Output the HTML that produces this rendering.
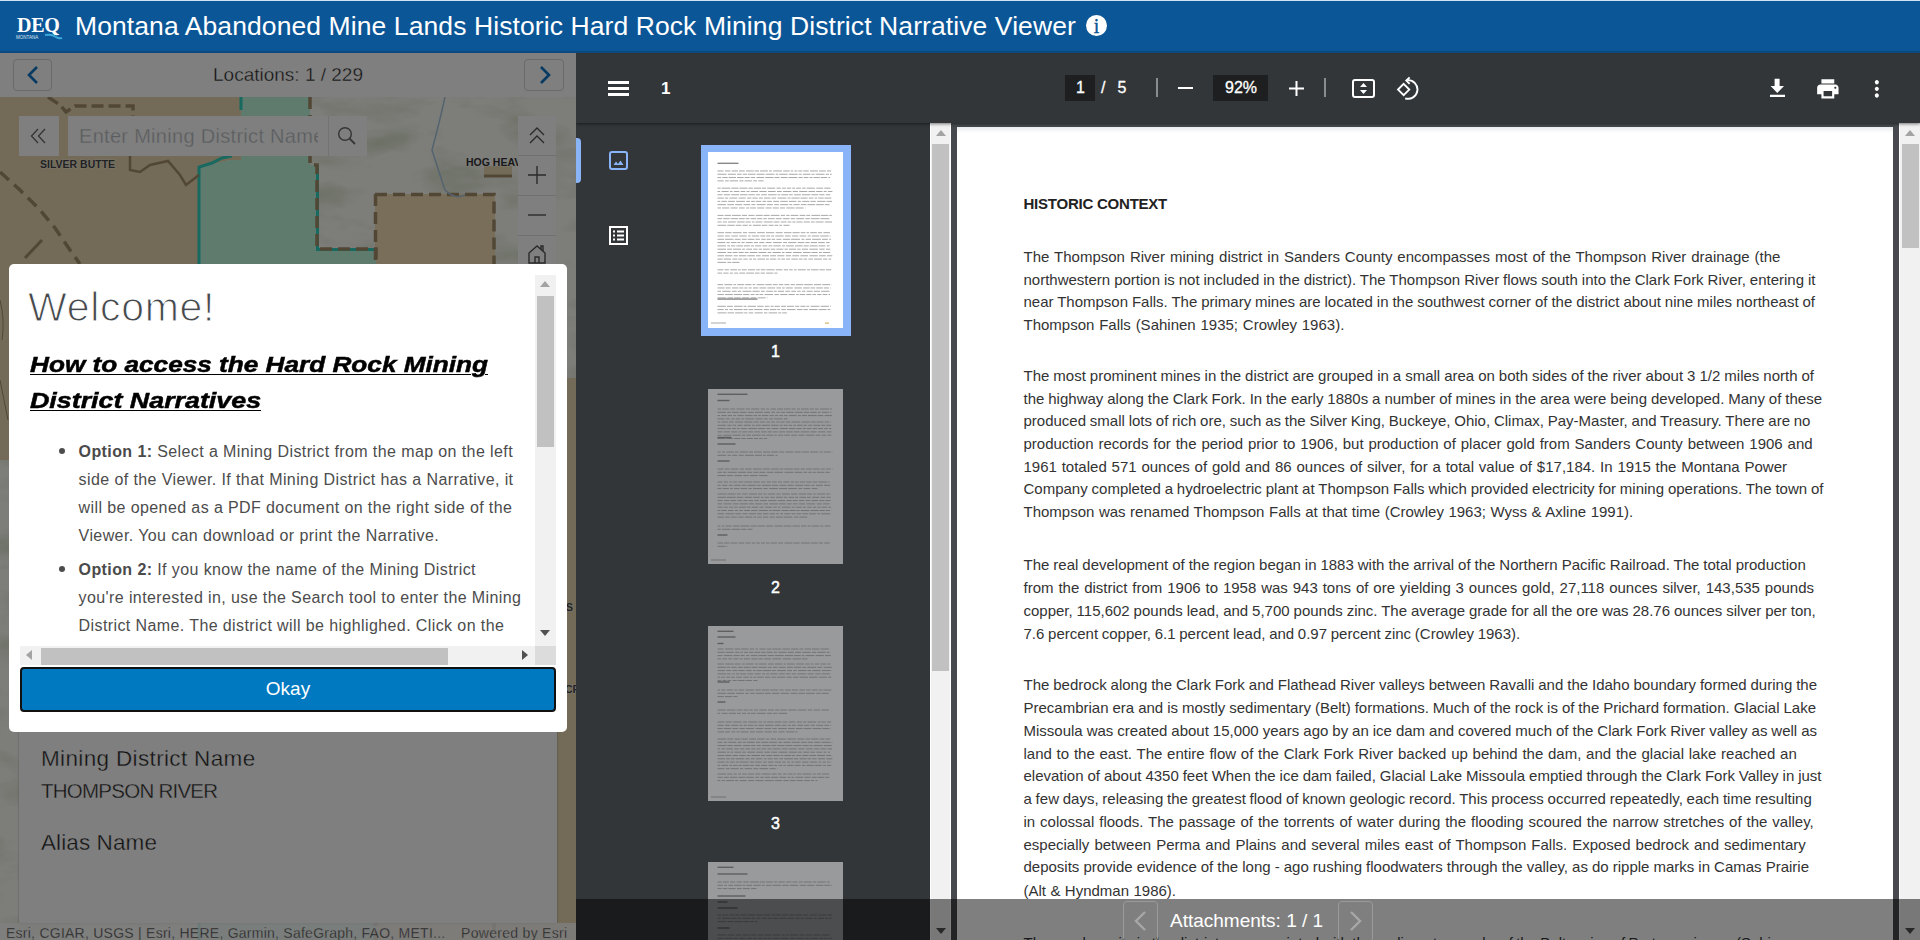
<!DOCTYPE html>
<html><head><meta charset="utf-8">
<style>
*{box-sizing:border-box}
html,body{margin:0;padding:0}
body{width:1920px;height:940px;overflow:hidden;position:relative;font-family:"Liberation Sans",sans-serif;background:#323639}
.abs{position:absolute}
#hdr{left:0;top:0;width:1920px;height:53px;background:#0b5697;border-top:1px solid #cfe3f3;border-bottom:2px solid #0a4a80}
#hdr .title{left:75px;top:9px;color:#fff;font-size:26.5px;white-space:nowrap;line-height:32px;letter-spacing:0.09px}
#left{left:0;top:53px;width:576px;height:887px;overflow:hidden;background:#e8e4d8}
#pdf{left:576px;top:53px;width:1344px;height:887px;overflow:hidden;background:#323639}
.nw{white-space:nowrap}
.hd{font-size:22.5px;line-height:35px;font-weight:bold;font-style:italic;color:#000;-webkit-text-stroke:0.5px #000;text-decoration:underline;text-decoration-thickness:1px;text-underline-offset:2px;transform-origin:0 0}
.bl{left:69.6px;font-size:16px;line-height:20px;color:#4c4c4c;letter-spacing:0.4px}
.bl b{color:#4a4a4a}
.pl{position:absolute;left:66.5px;font-size:15px;line-height:17px;white-space:nowrap;color:#333}
</style></head>
<body>
<!-- HEADER -->
<div id="hdr" class="abs">
  <div class="abs" style="left:17px;top:14px;color:#fff;font-family:'Liberation Serif',serif;font-weight:bold;font-size:20px;line-height:20px;letter-spacing:-0.3px">DEQ</div>
  <div class="abs" style="left:16px;top:34px;color:#dfe8f0;font-size:4.5px;line-height:5px;letter-spacing:0px">MONTANA</div>
  <svg class="abs" style="left:44px;top:32px" width="20" height="8"><path d="M1 2 Q8 1 12 4 Q15 6 18 5" stroke="#3aa8d8" stroke-width="2" fill="none"/></svg>
  <div class="abs title">Montana Abandoned Mine Lands Historic Hard Rock Mining District Narrative Viewer</div>
  <div class="abs" style="left:1086px;top:14px;width:21px;height:21px;border-radius:50%;background:#fff;color:#0b5697;font-family:'Liberation Serif',serif;font-size:20px;line-height:22px;text-align:center;-webkit-text-stroke:0.3px #0b4f8a">i</div>
</div>

<!-- LEFT PANEL -->
<div id="left" class="abs">
  <!-- MAP -->
  <svg class="abs" style="left:0;top:44px" width="576" height="843" viewBox="0 97 576 843">
    <defs>
      <filter id="topo" x="0" y="0" width="100%" height="100%">
        <feTurbulence type="fractalNoise" baseFrequency="0.014 0.03" numOctaves="4" seed="5" result="n"/>
        <feColorMatrix in="n" type="matrix" values="0 0 0 0 0.60  0 0 0 0 0.68  0 0 0 0 0.48  1.7 0 0 0 -0.80"/>
      </filter>
    </defs>
    <rect x="0" y="97" width="576" height="843" fill="#fbfbf5"/>
    <rect x="0" y="97" width="576" height="843" filter="url(#topo)"/>
    <!-- tan districts -->
    <path d="M0 97 H241 V160 L230 160 L199 167 V460 H0 Z" fill="#e6d6ae"/>
    <rect x="375" y="194" width="120" height="746" fill="#f0dcb4"/>
    <rect x="495" y="378" width="81" height="562" fill="#e6d6ae"/>
    <rect x="484" y="166" width="28" height="10" fill="#e6d6ae"/>
    <!-- teal district -->
    <path d="M241 97 H310 V165 H317 V249 H376 V940 H199 V167 L230 160 L241 160 Z" fill="#bcf6dc"/>
    <path d="M241 97 V110 M199 940 V167 L212 163 L222 158 L232 156" stroke="#30d2bf" stroke-width="3" fill="none"/>
    <path d="M317.5 165 V249.5 H376" stroke="#30d2bf" stroke-width="3" fill="none"/>
    <path d="M310 97 V165 H317 V249 H376 V940" stroke="#a48e6a" stroke-width="3.5" stroke-dasharray="12 6" fill="none"/>
    <path d="M375 194.5 H494 V940" stroke="#a48e6a" stroke-width="3.5" stroke-dasharray="12 6" fill="none"/>
    <path d="M375.5 194 V940" stroke="#a48e6a" stroke-width="3.5" stroke-dasharray="12 6" fill="none"/>
    <path d="M484 176 H512" stroke="#a48e6a" stroke-width="3" fill="none"/>
    <!-- other boundaries -->
    <path d="M48 97 L60 105 L66 112 L75 106 H133 V125" stroke="#a48e6a" stroke-width="3.5" stroke-dasharray="12 5" fill="none"/>
    <path d="M130 156 V170 L140 172 L150 165 L168 161 L180 175 L186 185 L199 175" stroke="#a48e6a" stroke-width="2.5" fill="none"/>
    <path d="M0 172 L20 190 L40 210 L55 228 L70 250 L80 264" stroke="#a48e6a" stroke-width="3.5" stroke-dasharray="12 7" fill="none"/>
    <path d="M25 258 L42 240" stroke="#a48e6a" stroke-width="3" fill="none"/>
    <path d="M0 300 Q5 320 2 340 M0 380 L8 420" stroke="#a48e6a" stroke-width="1" fill="none"/>
    <path d="M445 97 Q440 120 432 150 Q440 175 445 190 Q455 200 465 195" stroke="#a8c6dc" stroke-width="1.5" fill="none"/>
    <text x="40" y="167.5" font-family="Liberation Sans" font-weight="bold" font-size="10.5" fill="#444" stroke="#fff" stroke-width="0.6" paint-order="stroke">SILVER BUTTE</text>
    <text x="566" y="611" font-family="Liberation Sans" font-weight="bold" font-size="10.5" fill="#444" stroke="#fff" stroke-width="0.6" paint-order="stroke">S</text>
    <text x="565" y="693" font-family="Liberation Sans" font-weight="bold" font-size="10.5" fill="#444" stroke="#fff" stroke-width="0.6" paint-order="stroke">CR</text>
    <text x="466" y="165.5" font-family="Liberation Sans" font-weight="bold" font-size="10.5" fill="#333" stroke="#fff" stroke-width="0.6" paint-order="stroke">HOG HEAV</text>
  </svg>
  <!-- locations bar -->
  <div class="abs" style="left:0;top:0;width:576px;height:44px;background:#fff"></div>
  <div class="abs" style="left:13px;top:6px;width:39px;height:32px;border:1px solid #d4d4d4;border-radius:4px;background:#fff">
    <svg class="abs" style="left:12px;top:5px" width="14" height="20"><path d="M11 2 L3 10 L11 18" stroke="#0a74c4" stroke-width="2.6" fill="none"/></svg>
  </div>
  <div class="abs" style="left:524px;top:6px;width:40px;height:32px;border:1px solid #d4d4d4;border-radius:4px;background:#fff">
    <svg class="abs" style="left:13px;top:5px" width="14" height="20"><path d="M3 2 L11 10 L3 18" stroke="#0a74c4" stroke-width="2.6" fill="none"/></svg>
  </div>
  <div class="abs nw" style="left:213px;top:11px;font-size:19px;line-height:22px;color:#222;-webkit-text-stroke:0.35px #fff">Locations: 1 / 229</div>
  <!-- search widget -->
  <div class="abs" style="left:19px;top:63px;width:40px;height:40px;background:#fff">
    <svg class="abs" style="left:11px;top:12px" width="18" height="16"><path d="M8 1 L1.5 8 L8 15 M15 1 L8.5 8 L15 15" stroke="#6e6e6e" stroke-width="1.4" fill="none"/></svg>
  </div>
  <div class="abs" style="left:68px;top:63px;width:299px;height:40px;background:#fff;overflow:hidden">
    <div class="abs nw" style="left:11px;top:9px;width:239px;overflow:hidden;font-size:20px;line-height:22px;color:#b4b8bc;letter-spacing:0.3px;-webkit-text-stroke:0.3px #fff">Enter Mining District Name</div>
    <div class="abs" style="left:260px;top:0;width:1px;height:40px;background:#e6e6e6"></div>
    <svg class="abs" style="left:269px;top:10px" width="20" height="20"><circle cx="8" cy="8" r="6.3" stroke="#6e6e6e" stroke-width="1.5" fill="none"/><path d="M12.5 12.5 L18 18" stroke="#6e6e6e" stroke-width="1.8"/></svg>
  </div>
  <!-- zoom controls -->
  <div class="abs" style="left:518px;top:63px;width:38px;height:160px;background:#fff">
    <div class="abs" style="left:0;top:39px;width:38px;height:1px;background:#e0e0e0"></div>
    <div class="abs" style="left:0;top:79px;width:38px;height:1px;background:#e0e0e0"></div>
    <div class="abs" style="left:0;top:119px;width:38px;height:1px;background:#e0e0e0"></div>
    <svg class="abs" style="left:10px;top:10px" width="18" height="20"><path d="M2 9 L9 2 L16 9 M2 17 L9 10 L16 17" stroke="#555" stroke-width="1.4" fill="none"/></svg>
    <svg class="abs" style="left:10px;top:50px" width="18" height="18"><path d="M9 0 V18 M0 9 H18" stroke="#555" stroke-width="1.4"/></svg>
    <svg class="abs" style="left:10px;top:90px" width="18" height="18"><path d="M0 9 H18" stroke="#555" stroke-width="1.4"/></svg>
    <svg class="abs" style="left:9px;top:128px" width="20" height="20"><path d="M2 19 V9 L10 2 L18 9 V19 Z M8 19 V13 H12 V19 M14 5 V2 H16 V7" stroke="#555" stroke-width="1.4" fill="none"/></svg>
  </div>
  <!-- popup panel -->
  <div class="abs" style="left:19px;top:560px;width:538px;height:310px;background:#fff;box-shadow:0 1px 2px rgba(0,0,0,.3)">
    <div class="abs nw" style="left:22px;top:133px;font-size:22.5px;line-height:26px;color:#222;letter-spacing:0.35px;-webkit-text-stroke:0.35px #fff">Mining District Name</div>
    <div class="abs nw" style="left:22px;top:166px;font-size:20.5px;line-height:24px;color:#222;letter-spacing:-0.75px;-webkit-text-stroke:0.35px #fff">THOMPSON RIVER</div>
    <div class="abs nw" style="left:22px;top:217px;font-size:22.5px;line-height:26px;color:#222;letter-spacing:0.1px;-webkit-text-stroke:0.35px #fff">Alias Name</div>
  </div>
  <!-- attribution -->
  <div class="abs" style="left:0;top:870px;width:576px;height:17px;background:rgba(255,255,255,.8)">
    <div class="abs nw" style="left:6px;top:1.5px;font-size:14px;line-height:16px;color:#3a3a3a;width:445px;overflow:hidden;letter-spacing:0.25px;-webkit-text-stroke:0.3px #fff">Esri, CGIAR, USGS | Esri, HERE, Garmin, SafeGraph, FAO, METI...</div>
    <div class="abs nw" style="left:461px;top:1.5px;font-size:14px;line-height:16px;color:#3a3a3a;letter-spacing:0.3px;-webkit-text-stroke:0.3px #fff">Powered by Esri</div>
  </div>
  <!-- overlay -->
  <div class="abs" style="left:0;top:0;width:576px;height:887px;background:rgba(0,0,0,.5)"></div>
  <!-- modal -->
  <div class="abs" style="left:9px;top:211px;width:558px;height:468px;background:#fff;border-radius:5px;overflow:hidden">

    <div class="abs nw" style="left:19px;top:18.6px;font-size:41px;line-height:48px;color:#45484c;letter-spacing:0.7px;-webkit-text-stroke:1.1px #fff">Welcome!</div>
    <div class="abs nw hd" style="left:20.5px;top:83.1px;transform:scaleX(1.163)">How to access the Hard Rock Mining</div>
    <div class="abs nw hd" style="left:20.5px;top:118.5px;transform:scaleX(1.192)">District Narratives</div>
    <div class="abs" style="left:50px;top:184px;width:6px;height:6px;border-radius:50%;background:#4c4c4c"></div>
    <div class="abs" style="left:50px;top:302px;width:6px;height:6px;border-radius:50%;background:#4c4c4c"></div>
    <div class="abs nw bl" style="top:177.5px"><b>Option 1:</b> Select a Mining District from the map on the left</div>
    <div class="abs nw bl" style="top:205.5px">side of the Viewer. If that Mining District has a Narrative, it</div>
    <div class="abs nw bl" style="top:234.1px">will be opened as a PDF document on the right side of the</div>
    <div class="abs nw bl" style="top:262.1px">Viewer. You can download or print the Narrative.</div>
    <div class="abs nw bl" style="top:295.5px"><b>Option 2:</b> If you know the name of the Mining District</div>
    <div class="abs nw bl" style="top:324.1px">you're interested in, use the Search tool to enter the Mining</div>
    <div class="abs nw bl" style="top:352.2px">District Name. The district will be highlighed. Click on the</div>
    <div class="abs nw bl" style="top:380.2px">district, and the Narrative will be opened on the right side</div>
    <!-- v scrollbar -->
    <div class="abs" style="left:526px;top:11px;width:21px;height:371px;background:#f1f1f1">
      <svg class="abs" style="left:5px;top:6px" width="10" height="6"><path d="M0 6 L5 0 L10 6Z" fill="#a3a3a3"/></svg>
      <div class="abs" style="left:2px;top:21px;width:17px;height:151px;background:#c1c1c1"></div>
      <svg class="abs" style="left:5px;top:355px" width="10" height="6"><path d="M0 0 L5 6 L10 0Z" fill="#505050"/></svg>
    </div>
    <!-- h scrollbar -->
    <div class="abs" style="left:11px;top:382px;width:515px;height:19px;background:#f1f1f1">
      <svg class="abs" style="left:6px;top:4px" width="6" height="10"><path d="M6 0 L0 5 L6 10Z" fill="#a3a3a3"/></svg>
      <div class="abs" style="left:21px;top:2px;width:407px;height:17px;background:#c1c1c1"></div>
      <svg class="abs" style="left:502px;top:4px" width="6" height="10"><path d="M0 0 L6 5 L0 10Z" fill="#505050"/></svg>
    </div>
    <div class="abs" style="left:526px;top:382px;width:21px;height:19px;background:#dcdcdc"></div>
    <!-- okay -->
    <div class="abs" style="left:11px;top:403px;width:536px;height:45px;background:#0079c1;border:2px solid #111;border-radius:4px"></div>
    <div class="abs nw" style="left:11px;top:414px;width:536px;text-align:center;font-size:19px;line-height:22px;color:#fff">Okay</div>
  </div>
</div>

<!-- PDF VIEWER -->
<div id="pdf" class="abs">
  <!-- toolbar -->
  <div class="abs" style="left:0;top:0;width:1344px;height:70px;background:#323639;box-shadow:0 1px 3px rgba(0,0,0,.5);z-index:3">
    <svg class="abs" style="left:32px;top:28px" width="21" height="15"><rect x="0" y="0" width="21" height="3" fill="#fff"/><rect x="0" y="6" width="21" height="3" fill="#fff"/><rect x="0" y="12" width="21" height="3" fill="#fff"/></svg>
    <div class="abs" style="left:85px;top:25px;color:#fff;font-size:17px;font-weight:bold;line-height:22px">1</div>
    <div class="abs" style="left:489px;top:22px;width:30px;height:26px;background:#1d1f21"></div>
    <div class="abs" style="left:500px;top:25px;color:#fff;font-size:16px;line-height:20px;-webkit-text-stroke:0.3px #fff">1</div>
    <div class="abs" style="left:525px;top:25px;color:#fff;font-size:16px;line-height:20px;-webkit-text-stroke:0.3px #fff">/</div>
    <div class="abs" style="left:541.5px;top:25px;color:#fff;font-size:16px;line-height:20px;-webkit-text-stroke:0.3px #fff">5</div>
    <div class="abs" style="left:580px;top:25px;width:2px;height:19px;background:#8a8d90"></div>
    <div class="abs" style="left:602px;top:34px;width:15px;height:2px;background:#fff"></div>
    <div class="abs" style="left:637px;top:22px;width:55px;height:26px;background:#1d1f21"></div>
    <div class="abs" style="left:649px;top:25px;color:#fff;font-size:16px;line-height:20px;-webkit-text-stroke:0.3px #fff">92%</div>
    <svg class="abs" style="left:713px;top:28px" width="15" height="15"><rect x="6.5" y="0" width="2" height="15" fill="#fff"/><rect x="0" y="6.5" width="15" height="2" fill="#fff"/></svg>
    <div class="abs" style="left:748px;top:25px;width:2px;height:19px;background:#8a8d90"></div>
    <svg class="abs" style="left:776px;top:26px" width="23" height="19"><rect x="1" y="1" width="21" height="17" rx="2" fill="none" stroke="#fff" stroke-width="2"/><path d="M11.5 4 L15 8 H8 Z M11.5 15 L15 11 H8 Z" fill="#fff"/></svg>
    <svg class="abs" style="left:820px;top:23px" width="24" height="24" viewBox="0 0 24 24"><path d="M7.65 7.95 L13.25 13.55 L7.65 19.15 L2.05 13.55 Z" fill="none" stroke="#fff" stroke-width="1.9"/><path d="M11.5 4.2 A9.3 9.3 0 1 1 9.2 22.3" fill="none" stroke="#fff" stroke-width="1.9"/><path d="M13.6 1.3 L10.3 4.6 L13.6 7.9" fill="none" stroke="#fff" stroke-width="1.9"/></svg>
    <svg class="abs" style="left:1188px;top:22px" width="26" height="26" viewBox="0 0 26 26"><path d="M10.6 3.75 H15.6 V11 H20 L13.3 17.9 L6.6 11 H10.6 Z M6 19.8 H21 V22 H6 Z" fill="#fff"/></svg>
    <svg class="abs" style="left:1238.6px;top:22.5px" width="25.7" height="25.7" viewBox="0 0 24 24"><g><path d="M19 8H5c-1.66 0-3 1.34-3 3v6h4v4h12v-4h4v-6c0-1.66-1.34-3-3-3zm-3 11H8v-5h8v5zm3-7c-.55 0-1-.45-1-1s.45-1 1-1 1 .45 1 1-.45 1-1 1zm-1-9H6v4h12V3z" fill="#fff"/></g></svg>
    <svg class="abs" style="left:1288px;top:22.5px" width="25.7" height="25.7" viewBox="0 0 24 24"><g transform="translate(12 12) scale(0.95 1.03) translate(-12 -12)"><path d="M12 8c1.1 0 2-.9 2-2s-.9-2-2-2-2 .9-2 2 .9 2 2 2zm0 2c-1.1 0-2 .9-2 2s.9 2 2 2 2-.9 2-2-.9-2-2-2zm0 6c-1.1 0-2 .9-2 2s.9 2 2 2 2-.9 2-2-.9-2-2-2z" fill="#fff"/></g></svg>
  </div>
  <!-- sidebar -->
  <div class="abs" style="left:0;top:70px;width:354px;height:817px;background:#323639;overflow:hidden">
    <div class="abs" style="left:0;top:15px;width:5px;height:45px;background:#8ab4f8;border-radius:0 4px 4px 0"></div>
    <svg class="abs" style="left:33px;top:28px" width="19" height="19"><rect x="1" y="1" width="17" height="17" rx="2" fill="none" stroke="#8ab4f8" stroke-width="2"/><path d="M4.5 14 L7 10.5 L9 13 L11.5 9.5 L14.5 14 Z" fill="#8ab4f8"/></svg>
    <svg class="abs" style="left:33px;top:103px" width="19" height="19"><rect x="1" y="1" width="17" height="17" fill="none" stroke="#fff" stroke-width="2"/><rect x="4" y="4.5" width="2" height="2" fill="#fff"/><rect x="4" y="8.5" width="2" height="2" fill="#fff"/><rect x="4" y="12.5" width="2" height="2" fill="#fff"/><rect x="8" y="4.5" width="7" height="2" fill="#fff"/><rect x="8" y="8.5" width="7" height="2" fill="#fff"/><rect x="8" y="12.5" width="7" height="2" fill="#fff"/></svg>

    <div class="abs" style="left:124.5px;top:21.7px;width:150.2px;height:191px;background:#8ab4f8"></div>
    <svg class="abs" style="left:132px;top:29.4px" width="135" height="176"><rect width="135" height="176" fill="#fff"/><rect x="9.5" y="10.62" width="21" height="1.4" fill="#888"/><path d="M9.5 18.96h6.1M17.0 18.96h5.5M23.7 18.96h6.3M31.0 18.96h5.8M38.0 18.96h7.7M46.6 18.96h4.5M52.1 18.96h7.8M61.1 18.96h2.8M65.2 18.96h8.8M75.2 18.96h6.5M82.7 18.96h2.6M86.5 18.96h2.9M90.3 18.96h4.1M95.3 18.96h5.5M102.0 18.96h8.0M111.1 18.96h6.7M118.9 18.96h4.2" stroke="#a8a8a8" stroke-width="1.0"/><path d="M9.5 22.26h9.0M19.9 22.26h8.0M29.1 22.26h4.5M34.7 22.26h4.4M40.0 22.26h7.5M48.6 22.26h8.0M57.7 22.26h8.7M67.7 22.26h2.5M71.2 22.26h8.4M80.8 22.26h8.9M90.7 22.26h3.0M94.9 22.26h7.6M103.5 22.26h3.1M107.7 22.26h8.8M117.7 22.26h3.3M122.0 22.26h1.7" stroke="#a8a8a8" stroke-width="1.0"/><path d="M9.5 25.56h3.7M14.3 25.56h5.4M20.7 25.56h7.3M29.0 25.56h6.7M36.6 25.56h5.2M42.8 25.56h4.3M48.5 25.56h7.7M57.3 25.56h8.3M66.5 25.56h5.1M72.9 25.56h6.7M80.5 25.56h8.9M90.5 25.56h4.2M95.9 25.56h4.6M101.6 25.56h3.0M105.5 25.56h6.3M112.8 25.56h6.4M120.3 25.56h1.8" stroke="#a8a8a8" stroke-width="1.0"/><path d="M9.5 28.86h6.2M17.1 28.86h3.7M21.7 28.86h8.4M31.4 28.86h4.1M36.6 28.86h7.3M45.2 28.86h3.8M50.4 28.86h5.1" stroke="#a8a8a8" stroke-width="1.0"/><path d="M9.5 36.17h3.2M13.6 36.17h8.8M23.4 36.17h7.1M31.5 36.17h7.9M40.5 36.17h4.4M45.9 36.17h7.2M54.0 36.17h4.0M59.2 36.17h8.0M68.5 36.17h4.3M74.1 36.17h3.8M78.9 36.17h4.2M84.2 36.17h2.9M88.1 36.17h4.9M94.2 36.17h3.4M98.6 36.17h8.3M108.3 36.17h6.8M116.3 36.17h6.3" stroke="#a8a8a8" stroke-width="1.0"/><path d="M9.5 39.47h2.6M13.5 39.47h7.1M21.9 39.47h2.6M25.8 39.47h5.6M32.7 39.47h4.6M38.6 39.47h3.0M42.8 39.47h7.3M51.4 39.47h7.3M60.0 39.47h7.7M69.0 39.47h4.8M75.0 39.47h8.4M84.7 39.47h5.2M91.2 39.47h8.1M100.5 39.47h6.6M108.2 39.47h6.3M115.7 39.47h3.0M119.9 39.47h4.5" stroke="#a8a8a8" stroke-width="1.0"/><path d="M9.5 42.77h5.0M15.8 42.77h6.3M23.2 42.77h7.9M32.1 42.77h7.4M40.4 42.77h6.4M47.9 42.77h4.0M53.2 42.77h5.7M60.1 42.77h8.5M69.6 42.77h2.6M73.2 42.77h6.9M81.1 42.77h3.6M86.1 42.77h6.8M94.0 42.77h8.3M103.4 42.77h6.8M111.2 42.77h5.3M117.8 42.77h4.5" stroke="#a8a8a8" stroke-width="1.0"/><path d="M9.5 46.07h6.3M16.8 46.07h3.4M21.4 46.07h7.9M30.6 46.07h7.1M39.1 46.07h4.3M44.4 46.07h5.4M50.9 46.07h3.9M55.9 46.07h6.6M63.6 46.07h4.5M69.5 46.07h8.9M79.5 46.07h3.0M83.4 46.07h8.2M92.5 46.07h7.1M100.8 46.07h4.5M106.6 46.07h2.6M110.2 46.07h5.5M116.5 46.07h6.8" stroke="#a8a8a8" stroke-width="1.0"/><path d="M9.5 49.37h2.8M13.5 49.37h5.4M20.1 49.37h6.8M28.2 49.37h8.7M38.2 49.37h3.8M43.1 49.37h3.7M47.7 49.37h5.6M54.5 49.37h3.7M59.2 49.37h4.7M65.2 49.37h5.9M72.3 49.37h7.4M80.8 49.37h7.6M89.8 49.37h3.1M94.2 49.37h7.2M102.4 49.37h5.4M109.1 49.37h8.4M118.6 49.37h5.5" stroke="#a8a8a8" stroke-width="1.0"/><path d="M9.5 52.67h8.6M19.3 52.67h6.7M27.0 52.67h7.2M35.5 52.67h6.7M43.4 52.67h3.9M48.7 52.67h8.9M58.9 52.67h6.0M66.2 52.67h4.6M72.2 52.67h8.1M81.3 52.67h3.0M85.5 52.67h6.1M92.8 52.67h5.7M99.4 52.67h7.8M108.1 52.67h7.7M116.8 52.67h4.7" stroke="#a8a8a8" stroke-width="1.0"/><path d="M9.5 55.97h3.5M14.1 55.97h7.2M22.6 55.97h7.0M31.0 55.97h5.7M38.1 55.97h3.1M42.1 55.97h5.9M49.1 55.97h7.2M57.6 55.97h5.9M64.8 55.97h6.1M72.0 55.97h5.0M78.3 55.97h8.4M87.6 55.97h8.0M97.1 55.97h0.4" stroke="#a8a8a8" stroke-width="1.0"/><path d="M9.5 63.39h6.0M16.6 63.39h6.4M24.0 63.39h8.8M33.9 63.39h5.1M40.3 63.39h6.2M47.7 63.39h7.0M55.6 63.39h6.0M62.7 63.39h8.7M72.8 63.39h4.2M78.2 63.39h3.3M82.6 63.39h7.8M91.7 63.39h5.6M98.4 63.39h3.7M103.4 63.39h8.5M112.8 63.39h7.6M121.3 63.39h2.6" stroke="#a8a8a8" stroke-width="1.0"/><path d="M9.5 66.69h4.6M15.2 66.69h6.5M22.7 66.69h7.3M30.9 66.69h5.8M37.7 66.69h3.8M42.7 66.69h5.3M49.1 66.69h5.2M55.4 66.69h3.5M60.0 66.69h6.6M67.8 66.69h5.9M75.1 66.69h6.5M82.9 66.69h4.0M88.2 66.69h7.8M97.3 66.69h4.6M102.9 66.69h8.5M112.4 66.69h9.0" stroke="#a8a8a8" stroke-width="1.0"/><path d="M9.5 69.99h4.1M14.8 69.99h4.2M20.0 69.99h7.9M29.0 69.99h7.6M37.6 69.99h5.1M43.9 69.99h2.6M47.5 69.99h6.9M55.8 69.99h8.8M65.6 69.99h5.8M72.7 69.99h5.8M79.7 69.99h3.7M84.3 69.99h3.2M88.4 69.99h6.1M95.7 69.99h6.2M102.9 69.99h3.7M107.6 69.99h8.0M116.9 69.99h7.2" stroke="#a8a8a8" stroke-width="1.0"/><path d="M9.5 73.29h8.7M19.3 73.29h7.5M27.8 73.29h5.5M34.5 73.29h5.3M41.0 73.29h2.6M44.9 73.29h8.0M53.9 73.29h5.5M60.6 73.29h5.1M66.7 73.29h3.6M71.4 73.29h2.6M75.4 73.29h6.1" stroke="#a8a8a8" stroke-width="1.0"/><path d="M9.5 80.69h6.6M17.2 80.69h6.4M24.7 80.69h8.9M34.9 80.69h4.2M40.5 80.69h7.3M49.1 80.69h7.8M58.0 80.69h8.3M67.7 80.69h7.0M76.0 80.69h7.5M84.5 80.69h7.2M92.7 80.69h4.7M98.5 80.69h2.6M102.2 80.69h6.7M110.0 80.69h4.0M115.4 80.69h6.5" stroke="#a8a8a8" stroke-width="1.0"/><path d="M9.5 83.99h6.2M16.9 83.99h5.0M23.3 83.99h6.7M31.2 83.99h7.5M40.1 83.99h2.6M43.9 83.99h7.3M52.3 83.99h5.1M58.3 83.99h3.8M63.1 83.99h3.1M67.3 83.99h8.4M76.9 83.99h5.8M84.1 83.99h6.2M91.6 83.99h6.6M99.6 83.99h3.0M103.8 83.99h7.4M112.2 83.99h8.5M121.7 83.99h0.8" stroke="#a8a8a8" stroke-width="1.0"/><path d="M9.5 87.29h6.5M16.9 87.29h8.6M26.7 87.29h5.9M33.8 87.29h4.9M39.7 87.29h6.8M47.6 87.29h4.3M53.2 87.29h4.4M58.6 87.29h4.1M63.6 87.29h3.5M68.4 87.29h5.0M74.8 87.29h7.4M83.1 87.29h8.9M93.4 87.29h3.0M97.7 87.29h5.3M104.1 87.29h8.8M114.0 87.29h5.9M121.2 87.29h1.8" stroke="#a8a8a8" stroke-width="1.0"/><path d="M9.5 90.59h7.8M18.5 90.59h3.2M23.0 90.59h5.5M29.4 90.59h2.8M33.4 90.59h3.3M37.9 90.59h6.8M45.8 90.59h4.2M51.2 90.59h5.2M57.7 90.59h5.9M65.1 90.59h8.7M75.1 90.59h4.0M80.1 90.59h8.3M89.7 90.59h6.6M97.3 90.59h4.3M102.8 90.59h6.2M110.2 90.59h6.6M118.1 90.59h3.5" stroke="#a8a8a8" stroke-width="1.0"/><path d="M9.5 93.89h8.5M19.3 93.89h2.8M23.0 93.89h4.3M28.4 93.89h6.6M35.9 93.89h6.0M42.8 93.89h3.1M47.1 93.89h6.1M54.4 93.89h4.9M60.5 93.89h3.9M65.4 93.89h7.3M74.1 93.89h3.0M78.0 93.89h7.8M87.0 93.89h7.5M95.5 93.89h5.3M101.8 93.89h7.8M110.6 93.89h6.7M118.8 93.89h2.8" stroke="#a8a8a8" stroke-width="1.0"/><path d="M9.5 97.19h8.5M19.1 97.19h4.9M24.9 97.19h8.2M34.1 97.19h3.0M38.3 97.19h5.7M45.2 97.19h4.4M50.9 97.19h3.0M54.9 97.19h6.8M62.7 97.19h4.5M68.4 97.19h7.0M76.5 97.19h3.4M81.0 97.19h7.2M89.3 97.19h3.3M93.8 97.19h6.2M101.3 97.19h8.6M111.3 97.19h5.3M118.0 97.19h4.3" stroke="#a8a8a8" stroke-width="1.0"/><path d="M9.5 100.49h8.6M19.4 100.49h4.1M24.6 100.49h4.9M30.6 100.49h5.1M36.7 100.49h3.8M41.7 100.49h7.7M50.5 100.49h7.9M59.7 100.49h3.6M64.6 100.49h8.2M73.9 100.49h2.6M77.7 100.49h6.0M84.9 100.49h8.8M94.9 100.49h7.7M103.5 100.49h6.1M110.9 100.49h3.0M114.9 100.49h7.3" stroke="#a8a8a8" stroke-width="1.0"/><path d="M9.5 103.79h6.6M17.1 103.79h7.3M25.7 103.79h4.1M30.8 103.79h7.5M39.4 103.79h7.5M48.0 103.79h4.7M54.1 103.79h6.9M62.1 103.79h6.0M69.3 103.79h7.1M77.8 103.79h5.2M84.3 103.79h6.8M92.4 103.79h7.7M101.5 103.79h8.3M111.1 103.79h6.7M119.0 103.79h5.3" stroke="#a8a8a8" stroke-width="1.0"/><path d="M9.5 107.09h5.2M15.7 107.09h7.3M24.4 107.09h4.9M30.3 107.09h3.8M35.3 107.09h4.4M41.1 107.09h2.9M45.0 107.09h3.2M49.5 107.09h7.5M58.0 107.09h2.9M62.0 107.09h6.3M69.7 107.09h2.7M73.4 107.09h3.7M78.1 107.09h4.0M83.4 107.09h6.4M90.8 107.09h3.7M95.5 107.09h3.6M100.4 107.09h4.5M106.1 107.09h7.8M115.1 107.09h4.2M120.6 107.09h2.6" stroke="#a8a8a8" stroke-width="1.0"/><path d="M9.5 110.39h8.7M19.4 110.39h3.9M24.2 110.39h7.3" stroke="#a8a8a8" stroke-width="1.0"/><path d="M9.5 117.81h5.9M16.6 117.81h4.3M22.3 117.81h6.8M30.1 117.81h2.6M33.8 117.81h4.9M40.0 117.81h7.1M48.3 117.81h3.5M52.8 117.81h4.6M58.4 117.81h8.2M67.8 117.81h6.6M75.8 117.81h4.2M81.2 117.81h3.5M86.0 117.81h2.5M89.8 117.81h8.0M99.1 117.81h3.0M103.2 117.81h7.2M111.3 117.81h5.6M118.0 117.81h5.3" stroke="#a8a8a8" stroke-width="1.0"/><path d="M9.5 121.11h4.5M15.3 121.11h5.2M21.8 121.11h3.1M26.2 121.11h3.9M31.3 121.11h5.9M38.2 121.11h7.9M47.1 121.11h4.5M52.6 121.11h4.5M58.2 121.11h7.1M66.4 121.11h3.1" stroke="#a8a8a8" stroke-width="1.0"/><path d="M9.5 132.66h5.5M16.4 132.66h7.9M25.5 132.66h2.6M29.2 132.66h7.1M37.3 132.66h6.2M44.6 132.66h2.6M48.6 132.66h7.7M57.3 132.66h6.5M64.8 132.66h4.9M70.9 132.66h4.4M76.4 132.66h5.0M82.7 132.66h4.2M87.9 132.66h7.3M96.2 132.66h8.6M106.0 132.66h7.2M114.3 132.66h7.9M123.1 132.66h0.2" stroke="#a8a8a8" stroke-width="1.0"/><path d="M9.5 135.96h7.1M17.6 135.96h5.1M24.0 135.96h6.4M31.3 135.96h4.0M36.3 135.96h3.3M40.7 135.96h3.0M45.0 135.96h5.3M51.5 135.96h6.7M59.4 135.96h7.8M68.4 135.96h4.7M74.1 135.96h2.6M77.8 135.96h7.0M86.3 135.96h7.6M95.1 135.96h6.5M102.5 135.96h4.7M108.2 135.96h6.7M115.9 135.96h5.0M122.0 135.96h0.5" stroke="#a8a8a8" stroke-width="1.0"/><path d="M9.5 139.26h3.5M14.3 139.26h8.4M23.9 139.26h4.8M29.8 139.26h3.4M34.5 139.26h8.9M44.5 139.26h7.2M53.0 139.26h3.8M58.2 139.26h6.6M65.7 139.26h3.0M69.8 139.26h6.2M77.3 139.26h4.6M83.3 139.26h4.8M89.3 139.26h3.3M94.0 139.26h3.4M98.7 139.26h6.0M105.9 139.26h6.1M113.1 139.26h8.4" stroke="#a8a8a8" stroke-width="1.0"/><path d="M9.5 142.56h6.4M16.9 142.56h7.9M25.8 142.56h8.3M35.1 142.56h6.2M42.7 142.56h3.7M47.6 142.56h3.0M51.5 142.56h3.7M56.5 142.56h8.6M66.4 142.56h4.5M72.1 142.56h7.3M80.5 142.56h6.3M88.1 142.56h2.6M91.7 142.56h5.5M98.3 142.56h5.0M104.4 142.56h3.6M109.2 142.56h4.2M114.6 142.56h4.7M120.5 142.56h1.5" stroke="#a8a8a8" stroke-width="1.0"/><path d="M9.5 145.86h8.7M19.4 145.86h5.6M26.1 145.86h6.6M33.9 145.86h7.4M42.6 145.86h5.7M49.7 145.86h7.9M58.9 145.86h0.6" stroke="#a8a8a8" stroke-width="1.0"/><rect x="9.5" y="146.38" width="40" height="1.4" fill="#888"/><path d="M9.5 154.29h8.4M19.0 154.29h5.9M26.1 154.29h8.4M35.5 154.29h2.9M39.6 154.29h8.4M49.2 154.29h6.4M56.9 154.29h4.5M62.6 154.29h3.0M66.5 154.29h5.4M73.1 154.29h5.1M79.1 154.29h7.0M87.2 154.29h4.1M92.4 154.29h5.1M98.4 154.29h2.9M102.7 154.29h8.8M112.8 154.29h8.1M122.0 154.29h0.8" stroke="#a8a8a8" stroke-width="1.0"/><path d="M9.5 157.59h6.2M17.0 157.59h3.1M21.5 157.59h3.3M25.9 157.59h8.7M35.5 157.59h4.1M40.7 157.59h4.6M46.2 157.59h8.3M55.8 157.59h5.1M62.0 157.59h6.3M69.2 157.59h2.7M73.3 157.59h4.5M78.9 157.59h8.6M88.9 157.59h5.6M95.5 157.59h4.4M101.2 157.59h8.3M110.6 157.59h7.9M119.6 157.59h2.7" stroke="#a8a8a8" stroke-width="1.0"/><path d="M9.5 160.89h9.0M19.5 160.89h6.6M27.1 160.89h8.2M36.2 160.89h3.2M40.7 160.89h4.5M46.6 160.89h8.2M56.0 160.89h3.4M60.6 160.89h8.6M70.3 160.89h3.0M74.3 160.89h4.5" stroke="#a8a8a8" stroke-width="1.0"/><rect x="3" y="170.5" width="15" height="1" fill="#aaa"/><rect x="117" y="170.5" width="4" height="1.2" fill="#d9b36a"/></svg>
    <div class="abs" style="left:132px;top:218.5px;width:135px;text-align:center;color:#fff;font-size:16px;line-height:20px;-webkit-text-stroke:0.45px #fff">1</div>
    <svg class="abs" style="left:132px;top:265.8px" width="135" height="175"><rect width="135" height="175" fill="#fff"/><rect x="9.5" y="4.60" width="30" height="1.4" fill="#888"/><rect x="9.5" y="10.80" width="12" height="1.4" fill="#888"/><path d="M9.5 20.00h3.7M14.2 20.00h6.8M22.3 20.00h4.9M28.5 20.00h8.2M37.9 20.00h4.0M42.9 20.00h8.5M52.7 20.00h4.3M58.2 20.00h3.1M62.7 20.00h5.4M69.2 20.00h6.0M76.1 20.00h6.4M83.5 20.00h4.1M89.0 20.00h3.1M93.1 20.00h7.4M101.5 20.00h4.3M107.0 20.00h3.7M112.1 20.00h8.9M121.9 20.00h2.0" stroke="#b0b0b0" stroke-width="1.0"/><path d="M9.5 23.30h8.5M19.2 23.30h3.7M24.0 23.30h6.7M31.8 23.30h6.8M39.9 23.30h5.9M46.9 23.30h8.0M56.1 23.30h5.9M63.4 23.30h3.6M68.3 23.30h3.6M73.1 23.30h4.0M78.2 23.30h7.5M87.1 23.30h7.6M95.7 23.30h5.7M102.4 23.30h6.3M109.8 23.30h2.7M113.8 23.30h7.1M122.1 23.30h1.3" stroke="#b0b0b0" stroke-width="1.0"/><path d="M9.5 26.60h2.6M13.3 26.60h5.3M19.7 26.60h4.2M25.2 26.60h3.0M29.5 26.60h6.2M36.9 26.60h7.6M45.6 26.60h3.5M50.1 26.60h2.8M53.9 26.60h6.5M61.6 26.60h4.2M67.0 26.60h3.1M71.4 26.60h3.6M76.1 26.60h3.5M80.8 26.60h7.9M90.0 26.60h2.9M94.0 26.60h4.9M99.9 26.60h8.8M109.6 26.60h5.7M116.6 26.60h7.4" stroke="#b0b0b0" stroke-width="1.0"/><path d="M9.5 29.90h7.3M17.8 29.90h4.1M23.2 29.90h3.4M27.7 29.90h4.4M33.2 29.90h3.0M37.2 29.90h9.0M47.4 29.90h7.3M55.7 29.90h4.1M61.0 29.90h4.1M66.2 29.90h8.6M75.9 29.90h3.6" stroke="#b0b0b0" stroke-width="1.0"/><path d="M9.5 33.00h2.8M13.4 33.00h6.7M21.0 33.00h4.7M27.0 33.00h8.1M36.3 33.00h8.3M45.7 33.00h5.1M52.1 33.00h5.0M58.3 33.00h3.9M63.3 33.00h3.7M68.2 33.00h3.6M72.7 33.00h3.9M77.8 33.00h4.5M83.4 33.00h9.0M93.6 33.00h8.1M102.7 33.00h5.0M108.6 33.00h7.0M116.7 33.00h4.3M121.9 33.00h0.8" stroke="#b0b0b0" stroke-width="1.0"/><path d="M9.5 36.30h8.5M19.3 36.30h4.2M24.6 36.30h3.5M29.5 36.30h4.8M35.6 36.30h7.2M44.1 36.30h2.6M47.8 36.30h5.0M53.8 36.30h8.2M63.1 36.30h7.5M71.7 36.30h2.9M75.7 36.30h4.0M80.7 36.30h3.5M85.3 36.30h2.7M89.1 36.30h5.3M95.5 36.30h3.4M100.2 36.30h4.2M105.6 36.30h6.8M113.4 36.30h3.8M118.3 36.30h5.0" stroke="#b0b0b0" stroke-width="1.0"/><path d="M9.5 39.60h8.1M18.6 39.60h4.4M24.1 39.60h3.9M28.9 39.60h2.7M32.8 39.60h6.2M40.3 39.60h8.8M50.2 39.60h6.9M58.4 39.60h3.9M63.6 39.60h6.8M71.8 39.60h8.1M80.9 39.60h6.6M88.5 39.60h5.3M94.9 39.60h2.9M98.8 39.60h4.6M104.6 39.60h4.3M109.9 39.60h5.1M116.2 39.60h3.6M121.0 39.60h2.4" stroke="#b0b0b0" stroke-width="1.0"/><path d="M9.5 42.90h5.2M15.7 42.90h6.3M23.3 42.90h6.1M30.6 42.90h2.6M34.3 42.90h4.9M40.1 42.90h5.1M46.2 42.90h5.7M53.1 42.90h5.5M59.7 42.90h4.1M64.8 42.90h4.8M70.9 42.90h6.2M78.1 42.90h6.8M85.9 42.90h5.6M92.7 42.90h8.7M102.5 42.90h6.2M110.1 42.90h7.5M118.8 42.90h4.7" stroke="#b0b0b0" stroke-width="1.0"/><path d="M9.5 46.20h4.3M15.1 46.20h8.2M24.4 46.20h8.4M33.8 46.20h3.4M38.3 46.20h4.5M43.9 46.20h8.9M53.7 46.20h3.8M58.5 46.20h6.9M66.4 46.20h2.5M70.1 46.20h5.1M76.2 46.20h5.7M83.1 46.20h6.1M90.4 46.20h6.1M97.8 46.20h8.8M107.7 46.20h4.8M113.8 46.20h4.5M119.6 46.20h3.7" stroke="#b0b0b0" stroke-width="1.0"/><path d="M9.5 49.50h7.9M18.3 49.50h6.5M26.0 49.50h6.2M33.3 49.50h4.4M38.9 49.50h6.0M45.9 49.50h4.1M51.1 49.50h3.7M55.9 49.50h3.3" stroke="#b0b0b0" stroke-width="1.0"/><rect x="9.5" y="47.80" width="14" height="1.4" fill="#888"/><rect x="9.5" y="54.30" width="18" height="1.4" fill="#888"/><path d="M9.5 63.00h3.2M13.9 63.00h3.2M18.3 63.00h7.5M26.9 63.00h3.6M31.8 63.00h8.2M40.9 63.00h4.2M46.2 63.00h7.7M55.0 63.00h7.2M63.2 63.00h7.2M71.4 63.00h4.7M77.3 63.00h8.0M86.6 63.00h6.2M93.9 63.00h7.1M102.2 63.00h7.9M111.4 63.00h3.3M115.8 63.00h6.9M123.7 63.00h0.6" stroke="#b0b0b0" stroke-width="1.0"/><path d="M9.5 66.30h8.6M19.5 66.30h3.4M24.1 66.30h5.2M30.6 66.30h5.1M37.0 66.30h8.9M46.9 66.30h7.1M54.9 66.30h2.8M58.8 66.30h7.3M67.4 66.30h2.1" stroke="#b0b0b0" stroke-width="1.0"/><rect x="9.5" y="71.30" width="12" height="1.4" fill="#888"/><path d="M9.5 80.00h6.0M16.7 80.00h4.9M22.7 80.00h7.7M31.7 80.00h4.3M37.1 80.00h6.5M44.9 80.00h8.9M54.9 80.00h7.0M63.1 80.00h7.7M71.7 80.00h3.6M76.3 80.00h8.6M85.9 80.00h5.7M92.6 80.00h4.6M98.1 80.00h6.2M105.2 80.00h6.6M112.8 80.00h4.0M117.9 80.00h4.9M123.9 80.00h0.6" stroke="#b0b0b0" stroke-width="1.0"/><path d="M9.5 83.30h4.5M14.9 83.30h3.7M19.8 83.30h9.0M29.8 83.30h8.1M39.0 83.30h5.2M45.5 83.30h5.1M51.5 83.30h6.1M58.8 83.30h6.5M66.4 83.30h8.6M76.4 83.30h9.0M86.5 83.30h7.9M95.6 83.30h3.6M100.2 83.30h3.6M104.8 83.30h3.0M108.8 83.30h7.4M117.3 83.30h4.6" stroke="#b0b0b0" stroke-width="1.0"/><path d="M9.5 86.60h8.7M19.1 86.60h5.9M26.4 86.60h7.6M35.3 86.60h5.1M41.7 86.60h7.9M50.9 86.60h8.6" stroke="#b0b0b0" stroke-width="1.0"/><path d="M9.5 93.00h5.1M15.9 93.00h4.1M21.4 93.00h2.7M25.2 93.00h4.0M30.3 93.00h4.9M36.4 93.00h7.8M45.2 93.00h6.6M53.0 93.00h4.3M58.6 93.00h4.6M64.2 93.00h4.7M70.1 93.00h3.9M75.3 93.00h6.1M82.6 93.00h3.7M87.2 93.00h3.4M91.7 93.00h5.3M97.9 93.00h5.8M104.7 93.00h4.6M110.5 93.00h8.7M120.2 93.00h1.5" stroke="#b0b0b0" stroke-width="1.0"/><path d="M9.5 96.30h3.2M14.1 96.30h5.3M20.8 96.30h3.9M25.8 96.30h7.1M33.9 96.30h4.3M39.4 96.30h8.7M49.1 96.30h3.7M53.9 96.30h8.9M63.8 96.30h6.6M71.5 96.30h6.7M79.2 96.30h6.5M87.1 96.30h8.1M96.3 96.30h5.8M103.3 96.30h3.2M107.9 96.30h7.0M116.0 96.30h6.3" stroke="#b0b0b0" stroke-width="1.0"/><path d="M9.5 99.60h4.0M14.7 99.60h6.2M22.1 99.60h2.7M26.0 99.60h5.4M32.6 99.60h6.4M40.3 99.60h3.5M45.0 99.60h9.0M55.2 99.60h4.5M61.0 99.60h8.9M71.0 99.60h8.1M80.1 99.60h8.9M90.2 99.60h4.0M95.5 99.60h6.7M103.6 99.60h5.9" stroke="#b0b0b0" stroke-width="1.0"/><path d="M9.5 105.00h9.0M19.4 105.00h8.2M28.8 105.00h4.1M34.2 105.00h5.5M40.9 105.00h8.1M50.0 105.00h4.3M55.5 105.00h3.0M59.7 105.00h7.6M68.4 105.00h4.1M73.8 105.00h8.1M83.2 105.00h6.1M90.6 105.00h7.7M99.2 105.00h4.9M105.1 105.00h2.7M108.9 105.00h8.1M118.3 105.00h3.3M122.6 105.00h0.4" stroke="#b0b0b0" stroke-width="1.0"/><path d="M9.5 108.30h8.4M18.8 108.30h8.9M28.7 108.30h6.6M36.7 108.30h7.2M44.9 108.30h6.8M52.8 108.30h2.6M56.5 108.30h4.5M62.3 108.30h4.3M67.8 108.30h7.0M75.8 108.30h3.3M80.4 108.30h5.5M86.9 108.30h3.3M91.5 108.30h6.5M99.0 108.30h3.8M104.2 108.30h7.0M112.5 108.30h4.8M118.4 108.30h4.3" stroke="#b0b0b0" stroke-width="1.0"/><path d="M9.5 111.60h5.3M16.1 111.60h5.2M22.4 111.60h5.8M29.5 111.60h4.8M35.5 111.60h4.0M40.7 111.60h4.4M46.4 111.60h4.4M52.1 111.60h6.9M60.1 111.60h8.6M69.8 111.60h7.3M78.3 111.60h5.4M84.7 111.60h5.2M91.0 111.60h5.4M97.7 111.60h4.4M103.3 111.60h6.9M111.2 111.60h5.2M117.4 111.60h5.2" stroke="#b0b0b0" stroke-width="1.0"/><path d="M9.5 114.90h4.7M15.5 114.90h8.0M24.8 114.90h6.0M31.8 114.90h8.3M41.0 114.90h4.9M47.0 114.90h7.2M55.4 114.90h4.7M61.5 114.90h8.7M71.1 114.90h6.6M78.8 114.90h4.9M84.8 114.90h4.6M90.6 114.90h6.4M98.4 114.90h8.8M108.7 114.90h5.1M115.0 114.90h6.7M123.0 114.90h0.2" stroke="#b0b0b0" stroke-width="1.0"/><path d="M9.5 118.20h5.1M15.8 118.20h3.9M21.1 118.20h3.9M26.1 118.20h3.4M30.6 118.20h7.3M38.9 118.20h3.6M43.7 118.20h6.5M51.5 118.20h4.1M57.0 118.20h7.3M65.5 118.20h3.3M69.9 118.20h2.6M73.9 118.20h8.6M83.8 118.20h2.7M87.6 118.20h6.0M94.7 118.20h3.2M99.2 118.20h4.5M104.9 118.20h3.3M109.3 118.20h3.3M113.6 118.20h5.8M120.5 118.20h2.6" stroke="#b0b0b0" stroke-width="1.0"/><path d="M9.5 121.50h2.9M13.4 121.50h5.4M20.0 121.50h5.5M26.8 121.50h3.2M31.3 121.50h3.5M36.2 121.50h5.9M43.2 121.50h6.5M51.0 121.50h8.8M60.9 121.50h2.6M64.4 121.50h7.8M73.5 121.50h7.1M81.6 121.50h6.0M88.5 121.50h3.2M92.8 121.50h8.8M102.8 121.50h8.0M111.7 121.50h5.2M117.8 121.50h4.2M123.0 121.50h0.3" stroke="#b0b0b0" stroke-width="1.0"/><path d="M9.5 124.80h6.8M17.6 124.80h8.7M27.4 124.80h5.8M34.5 124.80h5.1M40.7 124.80h7.3M49.0 124.80h4.9M55.0 124.80h5.6M61.7 124.80h5.3M68.1 124.80h2.8M72.2 124.80h2.9M76.3 124.80h6.1M83.5 124.80h3.9M88.4 124.80h4.9M94.3 124.80h5.6M101.0 124.80h7.4M109.5 124.80h2.6M113.2 124.80h8.8M122.9 124.80h0.2" stroke="#b0b0b0" stroke-width="1.0"/><path d="M9.5 128.10h6.4M17.0 128.10h4.5M22.6 128.10h6.3M30.0 128.10h5.7M36.9 128.10h7.4M45.2 128.10h3.1M49.4 128.10h4.3M54.9 128.10h5.3M61.5 128.10h5.1M67.7 128.10h6.9M75.5 128.10h8.9M85.8 128.10h4.6M91.4 128.10h7.8" stroke="#b0b0b0" stroke-width="1.0"/><path d="M9.5 137.00h2.9M13.7 137.00h2.8M17.7 137.00h6.1M25.1 137.00h6.7M32.7 137.00h8.6M42.5 137.00h6.3M49.7 137.00h7.3M58.1 137.00h6.9M66.4 137.00h8.5M75.8 137.00h7.6M84.5 137.00h7.4M93.0 137.00h5.4M99.5 137.00h3.3M103.8 137.00h7.3M112.1 137.00h3.3M116.6 137.00h5.9" stroke="#b0b0b0" stroke-width="1.0"/><path d="M9.5 140.30h3.3M13.8 140.30h8.7M23.7 140.30h8.5M33.2 140.30h5.2M39.6 140.30h4.9" stroke="#b0b0b0" stroke-width="1.0"/><rect x="9.5" y="145.30" width="10" height="1.4" fill="#888"/><path d="M9.5 154.00h5.6M16.0 154.00h5.3M22.4 154.00h6.9M30.6 154.00h5.7M37.6 154.00h5.0M43.9 154.00h3.2M48.3 154.00h3.6M53.1 154.00h3.8M58.0 154.00h3.6M62.7 154.00h6.3M70.2 154.00h5.0M76.4 154.00h8.0M85.4 154.00h6.3M92.9 154.00h8.9M102.8 154.00h7.0M110.8 154.00h4.2M116.3 154.00h5.6" stroke="#b0b0b0" stroke-width="1.0"/><path d="M9.5 157.30h7.9M18.5 157.30h1.0" stroke="#b0b0b0" stroke-width="1.0"/><rect x="3" y="170.5" width="15" height="1" fill="#aaa"/><rect width="135" height="175" fill="#323639" opacity="0.5"/></svg>
    <div class="abs" style="left:132px;top:455px;width:135px;text-align:center;color:#fff;font-size:16px;line-height:20px;-webkit-text-stroke:0.45px #fff">2</div>
    <svg class="abs" style="left:132px;top:502.8px" width="135" height="175"><rect width="135" height="175" fill="#fff"/><rect x="9.5" y="4.60" width="16" height="1.4" fill="#888"/><rect x="9.5" y="10.30" width="18" height="1.4" fill="#888"/><rect x="9.5" y="16.80" width="6" height="1.4" fill="#888"/><path d="M9.5 23.00h6.1M17.0 23.00h8.4M26.6 23.00h5.7M33.2 23.00h7.4M41.6 23.00h4.5M47.4 23.00h2.7M51.4 23.00h6.2M58.8 23.00h4.7M64.4 23.00h8.7M74.4 23.00h7.7M83.0 23.00h7.6M91.6 23.00h3.8M96.6 23.00h6.5M104.0 23.00h7.5M112.7 23.00h8.3M122.4 23.00h0.2" stroke="#b0b0b0" stroke-width="1.0"/><path d="M9.5 26.30h7.2M17.7 26.30h8.1M27.1 26.30h4.2M32.3 26.30h2.6M36.1 26.30h4.1M41.3 26.30h4.1M46.4 26.30h5.7M53.1 26.30h4.4M58.5 26.30h5.8M65.6 26.30h3.5M70.5 26.30h8.1M79.8 26.30h6.0M87.1 26.30h6.0M94.3 26.30h8.5M104.0 26.30h4.2M109.1 26.30h8.6M118.8 26.30h2.8" stroke="#b0b0b0" stroke-width="1.0"/><path d="M9.5 29.60h4.9M15.7 29.60h8.6M25.5 29.60h6.2M32.7 29.60h4.0M38.1 29.60h3.2M42.7 29.60h6.8M50.4 29.60h8.4M59.7 29.60h6.2M66.8 29.60h8.9M76.8 29.60h8.2M85.9 29.60h6.8M93.7 29.60h2.7M97.6 29.60h8.9M107.7 29.60h8.1M117.0 29.60h5.9" stroke="#b0b0b0" stroke-width="1.0"/><path d="M9.5 32.90h3.7M14.4 32.90h4.8M20.3 32.90h3.8M25.4 32.90h5.2M31.7 32.90h3.0M35.9 32.90h6.1M43.4 32.90h6.1M50.5 32.90h4.5M56.0 32.90h7.1M64.4 32.90h8.8M74.7 32.90h8.5M84.5 32.90h8.6M94.0 32.90h5.5" stroke="#b0b0b0" stroke-width="1.0"/><path d="M9.5 38.00h6.5M17.2 38.00h8.6M26.7 38.00h5.9M34.0 38.00h2.7M37.6 38.00h8.1M47.1 38.00h2.7M50.7 38.00h7.9M59.9 38.00h5.9M66.9 38.00h7.4M75.6 38.00h2.5M79.1 38.00h7.7M88.1 38.00h7.9M97.2 38.00h4.7M102.9 38.00h2.6M106.8 38.00h4.2M112.2 38.00h5.9M119.2 38.00h3.3" stroke="#b0b0b0" stroke-width="1.0"/><path d="M9.5 41.30h8.2M18.7 41.30h3.5M23.2 41.30h5.6M30.1 41.30h4.7M35.8 41.30h6.8M43.6 41.30h5.9M50.5 41.30h8.2M59.7 41.30h4.0M64.8 41.30h4.6M70.7 41.30h6.9M78.9 41.30h6.0M85.8 41.30h7.5M94.3 41.30h3.9M99.3 41.30h8.9M109.3 41.30h4.8M115.5 41.30h8.3" stroke="#b0b0b0" stroke-width="1.0"/><path d="M9.5 44.60h7.6M18.4 44.60h4.7M24.4 44.60h5.0M30.4 44.60h6.4M38.1 44.60h5.6M45.0 44.60h2.6M48.7 44.60h5.0M54.6 44.60h8.4M64.0 44.60h3.8M69.2 44.60h8.7M79.3 44.60h4.7M85.4 44.60h3.4M90.1 44.60h8.6M99.7 44.60h3.4M104.3 44.60h8.2M113.8 44.60h8.7M123.6 44.60h0.5" stroke="#b0b0b0" stroke-width="1.0"/><path d="M9.5 47.90h8.6M19.0 47.90h3.7M23.8 47.90h2.8M27.7 47.90h3.7M32.3 47.90h5.9M39.4 47.90h6.2M46.9 47.90h5.9M54.2 47.90h3.0M58.2 47.90h3.0M62.3 47.90h7.4M71.1 47.90h5.8M77.9 47.90h4.6M83.7 47.90h4.4M89.4 47.90h8.8M99.4 47.90h6.4M107.1 47.90h5.5M113.6 47.90h8.6M123.6 47.90h0.0" stroke="#b0b0b0" stroke-width="1.0"/><path d="M9.5 51.20h2.8M13.3 51.20h3.6M18.2 51.20h3.9M23.0 51.20h3.9M28.2 51.20h5.7M35.2 51.20h5.5M41.7 51.20h2.6M45.4 51.20h2.8M49.2 51.20h6.5M56.8 51.20h5.6M63.6 51.20h4.6M69.2 51.20h8.2M78.6 51.20h5.2M85.0 51.20h5.5M91.6 51.20h8.4M101.0 51.20h8.6M110.9 51.20h8.2M120.1 51.20h3.2" stroke="#b0b0b0" stroke-width="1.0"/><path d="M9.5 54.50h3.6M14.4 54.50h4.0M19.6 54.50h3.5M24.5 54.50h4.3M29.8 54.50h7.0M37.8 54.50h6.1M45.1 54.50h4.4" stroke="#b0b0b0" stroke-width="1.0"/><rect x="9.5" y="55.30" width="12" height="1.4" fill="#888"/><path d="M9.5 64.00h2.5M13.2 64.00h4.2M18.6 64.00h6.6M26.3 64.00h3.1M30.6 64.00h5.6M37.4 64.00h8.8M47.3 64.00h5.4M53.6 64.00h7.7M62.3 64.00h7.9M71.5 64.00h4.2M77.0 64.00h5.8M83.9 64.00h6.1M91.4 64.00h5.7M98.2 64.00h4.4M103.9 64.00h5.8M110.7 64.00h3.8M115.5 64.00h7.8" stroke="#b0b0b0" stroke-width="1.0"/><path d="M9.5 67.30h8.5M19.2 67.30h7.7M28.1 67.30h7.8M37.2 67.30h3.6M42.2 67.30h4.5M47.7 67.30h8.5M57.0 67.30h5.8M63.9 67.30h7.6M72.8 67.30h8.4M82.6 67.30h6.7M90.2 67.30h6.8M98.0 67.30h8.9M108.2 67.30h4.5M113.7 67.30h7.0" stroke="#b0b0b0" stroke-width="1.0"/><path d="M9.5 70.60h6.5M17.0 70.60h7.2M25.2 70.60h4.3" stroke="#b0b0b0" stroke-width="1.0"/><rect x="9.5" y="75.30" width="8" height="1.4" fill="#888"/><path d="M9.5 84.00h8.2M18.9 84.00h8.6M28.7 84.00h5.7M35.5 84.00h4.8M41.2 84.00h3.5M46.1 84.00h4.0M51.3 84.00h7.5M60.1 84.00h5.9M67.0 84.00h4.3M72.2 84.00h6.7M80.2 84.00h8.6M89.9 84.00h8.5M99.8 84.00h4.4M105.5 84.00h6.5M113.4 84.00h7.5M122.0 84.00h0.1" stroke="#b0b0b0" stroke-width="1.0"/><path d="M9.5 87.30h2.7M13.6 87.30h6.0M20.7 87.30h7.3M29.0 87.30h3.8M34.0 87.30h4.1M39.2 87.30h3.0M43.0 87.30h4.8M49.0 87.30h8.7M58.9 87.30h5.2M65.2 87.30h4.0M70.4 87.30h8.7" stroke="#b0b0b0" stroke-width="1.0"/><path d="M9.5 96.00h7.0M17.7 96.00h6.1M25.1 96.00h8.6M35.0 96.00h4.1M40.3 96.00h9.0M50.5 96.00h3.7M55.5 96.00h2.9M59.3 96.00h6.1M66.4 96.00h7.2M74.9 96.00h4.6M80.7 96.00h6.7M88.7 96.00h5.5M95.3 96.00h3.2M99.6 96.00h8.7M109.7 96.00h2.9M113.5 96.00h4.3M119.0 96.00h4.2" stroke="#b0b0b0" stroke-width="1.0"/><path d="M9.5 99.30h6.2M17.0 99.30h5.1M23.3 99.30h6.9M31.5 99.30h2.8M35.5 99.30h3.3M39.8 99.30h5.6M46.3 99.30h3.0M50.4 99.30h5.5M56.9 99.30h8.7M66.9 99.30h5.7M73.7 99.30h4.6M79.7 99.30h3.3M84.0 99.30h3.9M89.3 99.30h5.8M96.2 99.30h5.1M102.6 99.30h4.2M108.1 99.30h7.1M116.3 99.30h4.9M122.3 99.30h0.9" stroke="#b0b0b0" stroke-width="1.0"/><path d="M9.5 102.60h5.2M15.7 102.60h7.5M24.4 102.60h5.6M31.3 102.60h5.5M37.8 102.60h8.3M47.6 102.60h7.6M56.3 102.60h6.9M64.4 102.60h4.4M70.1 102.60h8.7M80.0 102.60h6.8M88.0 102.60h6.7M95.7 102.60h7.5M104.4 102.60h8.9M114.3 102.60h7.1M122.4 102.60h0.3" stroke="#b0b0b0" stroke-width="1.0"/><path d="M9.5 105.90h6.5M17.0 105.90h5.1M23.5 105.90h3.8M28.6 105.90h2.9M32.7 105.90h7.8M41.9 105.90h5.0M48.1 105.90h7.1M56.5 105.90h7.4M65.0 105.90h4.1M70.4 105.90h6.1M77.8 105.90h8.9M87.6 105.90h1.9" stroke="#b0b0b0" stroke-width="1.0"/><path d="M9.5 113.00h8.7M19.2 113.00h6.2M26.6 113.00h5.7M33.3 113.00h6.6M41.2 113.00h6.8M49.0 113.00h7.7M57.9 113.00h3.4M62.5 113.00h5.5M69.2 113.00h8.9M79.3 113.00h8.7M89.1 113.00h7.4M97.5 113.00h4.5M103.2 113.00h7.0M111.5 113.00h5.0M117.5 113.00h4.8" stroke="#b0b0b0" stroke-width="1.0"/><path d="M9.5 116.30h4.9M15.7 116.30h3.5M20.2 116.30h8.2M29.7 116.30h4.1M34.8 116.30h3.3M39.0 116.30h7.7M48.0 116.30h4.2M53.3 116.30h7.0M61.3 116.30h7.8M70.4 116.30h3.9M75.5 116.30h7.0M83.7 116.30h8.2M92.9 116.30h5.6M99.5 116.30h5.4M106.2 116.30h6.2M113.6 116.30h8.9M123.5 116.30h0.9" stroke="#b0b0b0" stroke-width="1.0"/><path d="M9.5 119.60h8.8M19.3 119.60h5.4M25.8 119.60h7.9M35.1 119.60h6.9M42.9 119.60h4.8M49.0 119.60h3.9M54.2 119.60h8.2M63.4 119.60h4.9M69.3 119.60h7.2M77.4 119.60h7.0M85.4 119.60h8.0M94.5 119.60h6.3M101.7 119.60h2.8M105.6 119.60h8.9M115.7 119.60h8.1" stroke="#b0b0b0" stroke-width="1.0"/><path d="M9.5 122.90h2.6M13.4 122.90h3.6M18.1 122.90h6.8M26.2 122.90h4.6M31.9 122.90h4.4M37.4 122.90h4.8M43.3 122.90h4.1M48.5 122.90h4.2M53.6 122.90h4.5M59.3 122.90h4.2M64.5 122.90h8.0M73.7 122.90h5.8M80.5 122.90h8.3M90.1 122.90h6.5M97.9 122.90h7.0M106.0 122.90h5.2M112.3 122.90h5.8M119.2 122.90h5.0" stroke="#b0b0b0" stroke-width="1.0"/><path d="M9.5 126.20h8.3M18.8 126.20h2.6M22.5 126.20h2.7M26.5 126.20h6.5M34.1 126.20h3.7M39.2 126.20h7.9M48.3 126.20h7.0M56.6 126.20h5.5M63.2 126.20h6.1M70.6 126.20h8.9M80.9 126.20h7.9M89.8 126.20h4.1M95.3 126.20h6.0M102.4 126.20h4.5M108.3 126.20h5.9M115.5 126.20h3.0M119.9 126.20h2.2" stroke="#b0b0b0" stroke-width="1.0"/><path d="M9.5 129.50h6.7M17.1 129.50h6.2M24.6 129.50h5.3M31.2 129.50h6.3M38.8 129.50h3.6M43.5 129.50h8.4M53.1 129.50h3.9M58.2 129.50h6.0M65.3 129.50h6.3M72.7 129.50h2.6M76.4 129.50h6.8M84.1 129.50h3.0M88.4 129.50h4.7M94.4 129.50h6.1M101.5 129.50h6.6M109.2 129.50h7.8M118.3 129.50h5.1" stroke="#b0b0b0" stroke-width="1.0"/><path d="M9.5 132.80h7.7M18.2 132.80h3.8M22.9 132.80h3.6M27.6 132.80h8.7M37.4 132.80h4.2M42.9 132.80h3.7M47.8 132.80h6.5M55.7 132.80h2.8M59.6 132.80h5.0M65.9 132.80h4.1M71.3 132.80h3.7M76.2 132.80h8.8M86.0 132.80h4.3M91.7 132.80h6.9M99.5 132.80h3.7M104.2 132.80h4.4M109.9 132.80h7.1M118.4 132.80h6.0" stroke="#b0b0b0" stroke-width="1.0"/><path d="M9.5 136.10h7.2M17.8 136.10h2.9M21.8 136.10h5.0M28.0 136.10h2.8M31.7 136.10h8.9M41.7 136.10h4.6M47.3 136.10h6.4M55.0 136.10h3.7M59.9 136.10h5.7M66.9 136.10h6.2M74.1 136.10h3.7M79.1 136.10h3.0M83.4 136.10h2.7M87.1 136.10h5.5M94.0 136.10h6.5M101.8 136.10h7.4M110.5 136.10h2.8M114.6 136.10h3.5M119.1 136.10h2.7M122.7 136.10h0.6" stroke="#b0b0b0" stroke-width="1.0"/><path d="M9.5 139.40h2.8M13.6 139.40h6.4M21.4 139.40h2.7M25.1 139.40h4.4M30.5 139.40h3.2M34.7 139.40h6.7M42.3 139.40h3.6M47.1 139.40h4.9M53.0 139.40h6.2M60.4 139.40h5.0M66.5 139.40h2.8M70.5 139.40h3.8M75.3 139.40h2.6M79.2 139.40h6.3M86.6 139.40h6.0M94.0 139.40h3.4M98.5 139.40h7.1M106.7 139.40h7.1M115.1 139.40h2.8M118.9 139.40h4.4" stroke="#b0b0b0" stroke-width="1.0"/><path d="M9.5 142.70h7.0M17.9 142.70h3.7M22.7 142.70h8.0M32.0 142.70h3.2M36.7 142.70h7.3M45.3 142.70h4.9M51.4 142.70h8.7M61.4 142.70h6.3M69.0 142.70h0.5" stroke="#b0b0b0" stroke-width="1.0"/><path d="M9.5 148.00h8.7M19.2 148.00h5.1M25.5 148.00h3.4M30.2 148.00h2.9M34.3 148.00h4.3M39.7 148.00h6.4M47.1 148.00h5.4M53.8 148.00h8.9M63.8 148.00h4.9M69.9 148.00h3.7M75.0 148.00h3.8M79.9 148.00h4.7M85.5 148.00h2.5M89.0 148.00h4.6M94.6 148.00h8.9M104.8 148.00h2.9M109.0 148.00h4.0M114.1 148.00h7.2" stroke="#b0b0b0" stroke-width="1.0"/><path d="M9.5 151.30h5.2M15.8 151.30h5.1M21.9 151.30h7.3M30.4 151.30h7.0M38.3 151.30h7.6M47.3 151.30h3.8M52.3 151.30h3.6M56.8 151.30h5.2M63.0 151.30h7.2M71.4 151.30h6.9M79.7 151.30h2.9M83.5 151.30h2.7M87.4 151.30h7.9M96.5 151.30h6.1M103.9 151.30h4.9M109.7 151.30h6.7M117.3 151.30h4.0" stroke="#b0b0b0" stroke-width="1.0"/><path d="M9.5 154.60h2.9M13.6 154.60h3.3M18.1 154.60h7.9M27.0 154.60h3.3M31.6 154.60h7.2M40.1 154.60h6.1M47.4 154.60h8.1M56.8 154.60h8.8M66.7 154.60h7.5M75.4 154.60h5.5M81.9 154.60h5.6M88.5 154.60h6.4M96.1 154.60h5.8M102.8 154.60h3.4M107.4 154.60h2.1" stroke="#b0b0b0" stroke-width="1.0"/><rect x="3" y="170.5" width="15" height="1" fill="#aaa"/><rect width="135" height="175" fill="#323639" opacity="0.5"/></svg>
    <div class="abs" style="left:132px;top:691px;width:135px;text-align:center;color:#fff;font-size:16px;line-height:20px;-webkit-text-stroke:0.45px #fff">3</div>
    <svg class="abs" style="left:132px;top:738.8px" width="135" height="175"><rect width="135" height="175" fill="#fff"/><rect x="9.5" y="4.60" width="16" height="1.4" fill="#888"/><rect x="9.5" y="11.30" width="30" height="1.4" fill="#888"/><path d="M9.5 20.00h4.4M15.0 20.00h5.8M22.1 20.00h5.1M28.5 20.00h5.6M35.3 20.00h5.6M42.0 20.00h9.0M51.9 20.00h5.1M57.9 20.00h6.9M65.8 20.00h3.5M70.4 20.00h6.4M78.1 20.00h5.4M84.5 20.00h4.9M90.8 20.00h3.9M95.5 20.00h8.3M104.9 20.00h3.4M109.3 20.00h8.3M118.8 20.00h2.9" stroke="#b0b0b0" stroke-width="1.0"/><path d="M9.5 23.30h5.4M16.1 23.30h2.8M20.3 23.30h4.7M26.0 23.30h7.6M34.5 23.30h2.7M38.4 23.30h5.6M45.3 23.30h7.6M54.0 23.30h2.8M58.0 23.30h5.6M64.6 23.30h8.5M74.1 23.30h6.7M81.7 23.30h8.5M91.6 23.30h6.5M99.1 23.30h7.2M107.7 23.30h7.7M116.3 23.30h5.8M123.0 23.30h0.8" stroke="#b0b0b0" stroke-width="1.0"/><path d="M9.5 26.60h4.1M14.8 26.60h4.6M20.3 26.60h7.3M29.0 26.60h4.7M34.8 26.60h7.0M43.0 26.60h5.5" stroke="#b0b0b0" stroke-width="1.0"/><rect x="9.5" y="33.30" width="28" height="1.4" fill="#888"/><rect x="9.5" y="39.30" width="10" height="1.4" fill="#888"/><rect x="9.5" y="45.30" width="20" height="1.4" fill="#888"/><path d="M9.5 53.00h3.6M14.4 53.00h5.7M21.4 53.00h4.9M27.3 53.00h3.6M32.3 53.00h6.4M39.7 53.00h7.1M48.0 53.00h6.5M55.8 53.00h6.5M63.6 53.00h8.8M73.5 53.00h6.7M81.3 53.00h5.2M87.5 53.00h6.7M95.3 53.00h4.8M101.4 53.00h7.7M110.4 53.00h8.0M119.4 53.00h4.8" stroke="#b0b0b0" stroke-width="1.0"/><path d="M9.5 56.30h3.2M14.0 56.30h8.5M23.5 56.30h5.0M29.4 56.30h3.4M34.1 56.30h8.3M43.3 56.30h4.2M48.7 56.30h4.0M54.0 56.30h4.8M60.0 56.30h3.8M64.8 56.30h5.3M71.1 56.30h7.2M79.3 56.30h6.7M87.2 56.30h4.6M92.8 56.30h3.3M97.1 56.30h7.6M105.9 56.30h2.6M109.6 56.30h6.4M117.1 56.30h2.7M120.9 56.30h2.6" stroke="#b0b0b0" stroke-width="1.0"/><path d="M9.5 59.60h8.5M19.3 59.60h6.2M26.5 59.60h7.8M35.2 59.60h6.1M42.3 59.60h3.1M46.5 59.60h3.0" stroke="#b0b0b0" stroke-width="1.0"/><rect x="9.5" y="65.30" width="12" height="1.4" fill="#888"/><path d="M9.5 73.00h8.3M19.2 73.00h7.4M27.9 73.00h5.6M34.7 73.00h6.9M42.6 73.00h5.9M49.6 73.00h5.9M56.7 73.00h7.0M64.9 73.00h7.6M73.8 73.00h3.1M77.9 73.00h2.8M81.7 73.00h8.7M91.5 73.00h5.4M97.9 73.00h6.2M105.2 73.00h7.6M113.8 73.00h8.0" stroke="#b0b0b0" stroke-width="1.0"/><path d="M9.5 76.30h6.1M16.5 76.30h8.2M25.7 76.30h4.2M31.2 76.30h6.3M38.8 76.30h5.2M45.1 76.30h3.8M50.1 76.30h4.2M55.5 76.30h3.2M59.7 76.30h3.8M64.6 76.30h6.3M71.8 76.30h8.9M82.0 76.30h5.0M88.0 76.30h7.9M97.2 76.30h3.7M102.2 76.30h7.8M111.3 76.30h3.9M116.2 76.30h3.6M120.7 76.30h3.7" stroke="#b0b0b0" stroke-width="1.0"/><path d="M9.5 79.60h3.3M13.9 79.60h4.1M19.2 79.60h7.2M27.7 79.60h5.3M34.1 79.60h5.5M40.8 79.60h5.5M47.5 79.60h7.1M55.6 79.60h6.2M62.8 79.60h2.8M66.7 79.60h4.8M72.4 79.60h3.0M76.6 79.60h8.6M86.5 79.60h2.7M90.3 79.60h4.9M96.2 79.60h3.4M100.8 79.60h8.0M109.9 79.60h3.6M114.5 79.60h2.6M118.3 79.60h4.0" stroke="#b0b0b0" stroke-width="1.0"/><path d="M9.5 82.90h3.0M13.5 82.90h4.6M19.4 82.90h7.3M27.7 82.90h5.4M34.2 82.90h5.6M41.1 82.90h4.2M46.6 82.90h8.5M56.3 82.90h8.7M66.4 82.90h3.6M71.4 82.90h3.8M76.5 82.90h3.0" stroke="#b0b0b0" stroke-width="1.0"/><rect width="135" height="175" fill="#323639" opacity="0.5"/></svg>
  </div>
  <!-- sidebar scrollbar -->
  <div class="abs" style="left:354px;top:70px;width:21px;height:817px;background:#f1f1f1;border-left:1px solid #fff;border-right:1px solid #fff">
    <svg class="abs" style="left:5px;top:7px" width="10" height="6"><path d="M0 6 L5 0 L10 6Z" fill="#a3a3a3"/></svg>
    <div class="abs" style="left:1px;top:21px;width:17px;height:527px;background:#c1c1c1"></div>
    <svg class="abs" style="left:5px;top:805px" width="10" height="6"><path d="M0 0 L5 6 L10 0Z" fill="#505050"/></svg>
  </div>
  <!-- content bg -->
  <div class="abs" style="left:375px;top:70px;width:948px;height:817px;background:#46494d;overflow:hidden">
    <div class="abs" style="left:6px;top:4px;width:936px;height:900px;background:linear-gradient(#e9ebed,#fff 6px)">
<div class="pl" style="top:67.8px;font-weight:bold;color:#222;letter-spacing:-0.23px">HISTORIC CONTEXT</div>
<div class="pl" style="top:120.8px;word-spacing:0.811px">The Thompson River mining district in Sanders County encompasses most of the Thompson River drainage (the</div>
<div class="pl" style="top:143.5px;word-spacing:-0.238px">northwestern portion is not included in the district). The Thompson River flows south into the Clark Fork River, entering it</div>
<div class="pl" style="top:166.2px;word-spacing:-0.266px">near Thompson Falls. The primary mines are located in the southwest corner of the district about nine miles northeast of</div>
<div class="pl" style="top:188.9px;word-spacing:0.627px">Thompson Falls (Sahinen 1935; Crowley 1963).</div>
<div class="pl" style="top:240.1px;word-spacing:-0.170px">The most prominent mines in the district are grouped in a small area on both sides of the river about 3 1/2 miles north of</div>
<div class="pl" style="top:262.7px;word-spacing:-0.241px">the highway along the Clark Fork. In the early 1880s a number of mines in the area were being developed. Many of these</div>
<div class="pl" style="top:285.3px;word-spacing:-0.369px">produced small lots of rich ore, such as the Silver King, Buckeye, Ohio, Climax, Pay-Master, and Treasury. There are no</div>
<div class="pl" style="top:308.2px;word-spacing:0.710px">production records for the period prior to 1906, but production of placer gold from Sanders County between 1906 and</div>
<div class="pl" style="top:330.8px;word-spacing:0.657px">1961 totaled 571 ounces of gold and 86 ounces of silver, for a total value of $17,184. In 1915 the Montana Power</div>
<div class="pl" style="top:353.4px;word-spacing:-0.305px">Company completed a hydroelectric plant at Thompson Falls which provided electricity for mining operations. The town of</div>
<div class="pl" style="top:376.3px;word-spacing:0.373px">Thompson was renamed Thompson Falls at that time (Crowley 1963; Wyss &amp; Axline 1991).</div>
<div class="pl" style="top:428.9px;word-spacing:-0.200px">The real development of the region began in 1883 with the arrival of the Northern Pacific Railroad. The total production</div>
<div class="pl" style="top:451.5px;word-spacing:0.723px">from the district from 1906 to 1958 was 943 tons of ore yielding 3 ounces gold, 27,118 ounces silver, 143,535 pounds</div>
<div class="pl" style="top:474.8px;word-spacing:-0.263px">copper, 115,602 pounds lead, and 5,700 pounds zinc. The average grade for all the ore was 28.76 ounces silver per ton,</div>
<div class="pl" style="top:497.8px;word-spacing:-0.479px">7.6 percent copper, 6.1 percent lead, and 0.97 percent zinc (Crowley 1963).</div>
<div class="pl" style="top:548.9px;word-spacing:-0.248px">The bedrock along the Clark Fork and Flathead River valleys between Ravalli and the Idaho boundary formed during the</div>
<div class="pl" style="top:571.7px;word-spacing:-0.203px">Precambrian era and is mostly sedimentary (Belt) formations. Much of the rock is of the Prichard formation. Glacial Lake</div>
<div class="pl" style="top:594.8px;word-spacing:-0.200px">Missoula was created about 15,000 years ago by an ice dam and covered much of the Clark Fork River valley as well as</div>
<div class="pl" style="top:617.8px;word-spacing:0.593px">land to the east. The entire flow of the Clark Fork River backed up behind the dam, and the glacial lake reached an</div>
<div class="pl" style="top:640.4px;word-spacing:-0.233px">elevation of about 4350 feet When the ice dam failed, Glacial Lake Missoula emptied through the Clark Fork Valley in just</div>
<div class="pl" style="top:663.3px;word-spacing:-0.391px">a few days, releasing the greatest flood of known geologic record. This process occurred repeatedly, each time resulting</div>
<div class="pl" style="top:685.9px;word-spacing:0.764px">in colossal floods. The passage of the torrents of water during the flooding scoured the narrow stretches of the valley,</div>
<div class="pl" style="top:708.5px;word-spacing:0.862px">especially between Perma and Plains and several miles east of Thompson Falls. Exposed bedrock and sedimentary</div>
<div class="pl" style="top:731.3px;word-spacing:-0.113px">deposits provide evidence of the long - ago rushing floodwaters through the valley, as do ripple marks in Camas Prairie</div>
<div class="pl" style="top:755.1px;word-spacing:0.255px">(Alt &amp; Hyndman 1986).</div>
<div class="pl" style="top:807.3px;word-spacing:-0.9px">The ore deposits in the district are associated with the sedimentary rocks of the Belt series of Proterozoic age (Sahinen</div>
    </div>
  </div>
  <!-- right scrollbar -->
  <div class="abs" style="left:1323px;top:70px;width:21px;height:817px;background:#f1f1f1;border-left:1px solid #fff">
    <svg class="abs" style="left:5px;top:7px" width="10" height="6"><path d="M0 6 L5 0 L10 6Z" fill="#a3a3a3"/></svg>
    <div class="abs" style="left:2px;top:21px;width:17px;height:104px;background:#c1c1c1"></div>
    <svg class="abs" style="left:5px;top:805px" width="10" height="6"><path d="M0 0 L5 6 L10 0Z" fill="#505050"/></svg>
  </div>

  <div class="abs" style="left:0;top:846px;width:1344px;height:41px;background:rgba(0,0,0,.5);z-index:5">
    <div class="abs" style="left:547px;top:2px;width:35px;height:41px;border:1px solid #9a9a9a;border-radius:4px"></div>
    <svg class="abs" style="left:557px;top:12px" width="14" height="20"><path d="M12 1 L3 10 L12 19" stroke="#a8a8a8" stroke-width="2.4" fill="none"/></svg>
    <div class="abs nw" style="left:594px;top:11px;font-size:19px;line-height:22px;color:#fff">Attachments: 1 / 1</div>
    <div class="abs" style="left:762px;top:2px;width:35px;height:41px;border:1px solid #9a9a9a;border-radius:4px"></div>
    <svg class="abs" style="left:773px;top:12px" width="14" height="20"><path d="M2 1 L11 10 L2 19" stroke="#a8a8a8" stroke-width="2.4" fill="none"/></svg>
  </div>
</div>
</body></html>
